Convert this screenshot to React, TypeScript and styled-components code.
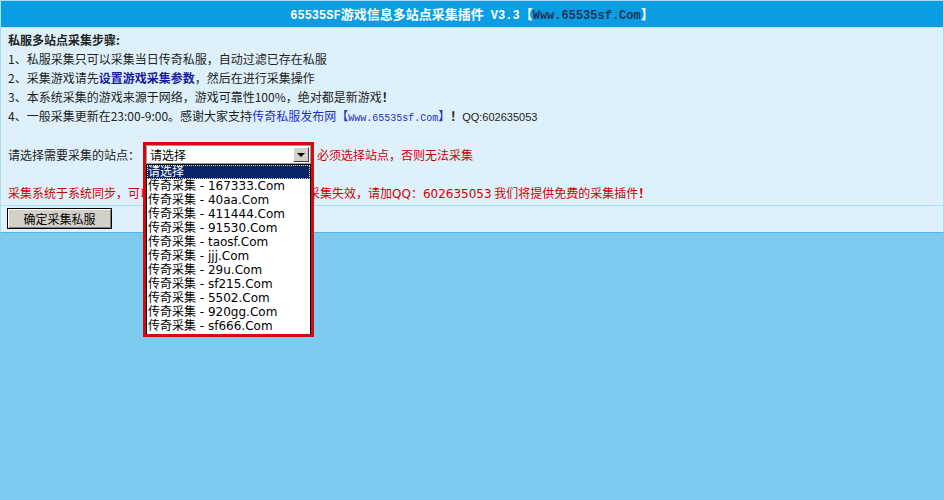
import React from "react";
import styled, { createGlobalStyle } from "styled-components";

const GlobalStyle = createGlobalStyle`
  html { background: #7ecbf0; }
  html, body { margin: 0; padding: 0; }
  body {
    min-height: 500px;
    font-family: "Noto Sans CJK SC", sans-serif;
    font-size: 12px;
    color: #222;
  }
  #root { min-height: 500px; }
`;

const Panel = styled.div`
  width: 942px;
  border: 1px solid #a9def4;
  border-bottom-color: #52b3e4;
  background: #def1fb;
`;

const Header = styled.div`
  height: 26px;
  line-height: 26px;
  background: #0a9de4;
  border-bottom: 1px solid #b5e3f6;
  text-align: center;
  color: #fff;
  font-weight: bold;
  font-size: 13px;
  white-space: nowrap;
`;

const HeaderLatin = styled.span<{ $dark?: boolean }>`
  color: ${(p) => (p.$dark ? "#1c3559" : "#fff")};
  font-family: "Liberation Mono", monospace;
  font-size: 12px;
`;

const Latin = styled.span`
  font-family: "Liberation Mono", monospace;
  font-size: 10px;
`;

const Steps = styled.div`
  padding: 2px 7px 3px;
  position: relative;
`;

const Line = styled.div<{ $bold?: boolean; $red?: boolean }>`
  line-height: 19px;
  height: 19px;
  white-space: nowrap;
  font-weight: ${(p) => (p.$bold ? "bold" : "normal")};
  color: ${(p) => (p.$red ? "#d00000" : "#222")};
`;

const Strong = styled.b`
  color: #1a1a9e;
`;

const Bang = styled.b`
  color: #222;
`;

const Link = styled.span`
  color: #1f2fd0;
`;

const Plain = styled.span`
  font-family: "Liberation Sans", sans-serif;
  font-size: 11px;
`;

const FormRow = styled.div`
  margin-top: 20px;
  height: 19px;
  display: flex;
  align-items: center;
  white-space: nowrap;
`;

const Label = styled.span`
  width: 138px;
`;

const SelectWrap = styled.div`
  position: relative;
  width: 165px;
  height: 19px;
`;

const SelectBox = styled.div`
  box-sizing: border-box;
  width: 165px;
  height: 19px;
  background: #fff;
  border: 1px solid #9a9a9a;
  display: flex;
  align-items: center;
  justify-content: space-between;
  padding: 0 1px 0 3px;
  font-family: "DejaVu Sans", "Noto Sans CJK SC", sans-serif;
  font-size: 12px;
  color: #000;
`;

const ArrowButton = styled.div`
  box-sizing: border-box;
  width: 16px;
  height: 15px;
  background: #d4d0c8;
  border: 1px solid;
  border-color: #fff #404040 #404040 #fff;
  display: flex;
  align-items: center;
  justify-content: center;
  &::after {
    content: "";
    border-left: 4px solid transparent;
    border-right: 4px solid transparent;
    border-top: 4px solid #000;
  }
`;

const Frame = styled.div`
  position: absolute;
  top: -3px;
  left: -3px;
  width: 171px;
  height: 195px;
  box-sizing: border-box;
  border: 3px solid #d20c0c;
  pointer-events: none;
  z-index: 3;
`;

const OptionList = styled.div`
  position: absolute;
  top: 19px;
  left: 0;
  width: 165px;
  height: 171px;
  box-sizing: border-box;
  border: 1px solid #000;
  background: #fff;
  z-index: 2;
  font-family: "DejaVu Sans", "Noto Sans CJK SC", sans-serif;
  font-size: 12px;
`;

const Option = styled.div<{ $active?: boolean }>`
  height: 14px;
  line-height: 14px;
  padding-left: 1px;
  box-sizing: border-box;
  white-space: nowrap;
  color: ${(p) => (p.$active ? "#fff" : "#000")};
  background: ${(p) => (p.$active ? "#0a246a" : "transparent")};
  outline: ${(p) => (p.$active ? "1px dotted #e8e4b0" : "none")};
  outline-offset: -1px;
`;

const Warn = styled.span`
  margin-left: 6px;
  color: #d00000;
`;

const Notice = styled(Line)`
  margin-top: 19px;
`;

const NoticeLatin = styled.span`
  font-family: "DejaVu Sans", sans-serif;
  font-size: 12px;
`;

const Actions = styled.div`
  border-top: 1px solid #a9def4;
  padding: 2px 6px 3px;
`;

const Button = styled.button`
  width: 105px;
  height: 21px;
  background: #d4d0c8;
  border: 1px solid #000;
  box-shadow: inset 1px 1px 0 #fff, inset -1px -1px 0 #808080;
  font-family: "Noto Sans CJK SC", sans-serif;
  font-size: 12px;
  color: #000;
  padding: 0;
  display: block;
`;

const sites = [
  "167333.Com",
  "40aa.Com",
  "411444.Com",
  "91530.Com",
  "taosf.Com",
  "jjj.Com",
  "29u.Com",
  "sf215.Com",
  "5502.Com",
  "920gg.Com",
  "sf666.Com",
];

export default function App() {
  return (
    <>
      <GlobalStyle />
      <Panel>
        <Header>
          <HeaderLatin>65535SF</HeaderLatin>游戏信息多站点采集插件
          <HeaderLatin> V3.3</HeaderLatin>【<HeaderLatin $dark>Www.65535sf.Com</HeaderLatin>】
        </Header>
        <Steps>
          <Line $bold>私服多站点采集步骤:</Line>
          <Line>1、私服采集只可以采集当日传奇私服，自动过滤已存在私服</Line>
          <Line>
            2、采集游戏请先<Strong>设置游戏采集参数</Strong>，然后在进行采集操作
          </Line>
          <Line>
            3、本系统采集的游戏来源于网络，游戏可靠性100%，绝对都是新游戏<Bang>！</Bang>
          </Line>
          <Line>
            4、一般采集更新在23:00-9:00。感谢大家支持
            <Link>
              传奇私服发布网【<Latin>Www.65535sf.Com</Latin>】
            </Link>
            <Bang>！</Bang>
            <Plain>QQ:602635053</Plain>
          </Line>
          <FormRow>
            <Label>请选择需要采集的站点：</Label>
            <SelectWrap>
              <SelectBox>
                <span>请选择</span>
                <ArrowButton />
              </SelectBox>
              <OptionList>
                <Option $active>请选择</Option>
                {sites.map((s) => (
                  <Option key={s}>传奇采集 - {s}</Option>
                ))}
              </OptionList>
              <Frame />
            </SelectWrap>
            <Warn>必须选择站点，否则无法采集</Warn>
          </FormRow>
          <Notice $red>
            采集系统于系统同步，可以正常采集，如目标站改版导致采集失效，请加
            <NoticeLatin>QQ</NoticeLatin>：<NoticeLatin>602635053</NoticeLatin>{" "}
            我们将提供免费的采集插件<b>！</b>
          </Notice>
        </Steps>
        <Actions>
          <Button>确定采集私服</Button>
        </Actions>
      </Panel>
    </>
  );
}
